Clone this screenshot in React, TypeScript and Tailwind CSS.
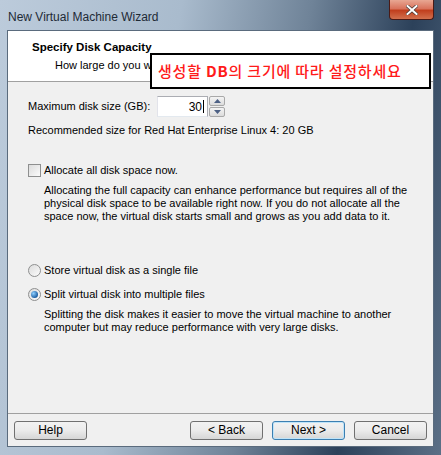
import { useState } from "react";

const font = { fontFamily: '"Liberation Sans", Arial, sans-serif' };

function WinButton({ label, focused }: { label: string; focused?: boolean }) {
  return (
    <button
      className={
        "w-[73px] h-[19px] rounded-[3px] border text-[12px] leading-none text-black flex items-center justify-center bg-gradient-to-b from-[#f2f2f2] via-[#ebebeb] to-[#d6d6d6] " +
        (focused ? "border-[#3c7fb1] shadow-[inset_0_0_0_1px_#bfe4f9]" : "border-[#707070]")
      }
    >
      {label}
    </button>
  );
}

function Radio({ checked }: { checked?: boolean }) {
  return (
    <span className="shrink-0 w-[13px] h-[13px] rounded-full border border-[#8e8f8f] bg-gradient-to-br from-[#dcdcdc] to-[#fbfbfb] flex items-center justify-center">
      {checked && (
        <span className="w-[7px] h-[7px] rounded-full bg-[radial-gradient(circle_at_35%_35%,#8fd0ff,#1d5fa3_70%)]" />
      )}
    </span>
  );
}

export default function App() {
  const [size] = useState("30");
  return (
    <div
      className="relative w-[441px] h-[455px] overflow-hidden bg-[linear-gradient(100deg,#bccbdb_0%,#a9bbcd_35%,#6f8398_60%,#2c415a_80%,#5b6f86_100%)]"
      style={font}
    >
      {/* title bar */}
      <div className="h-[30px] flex items-start justify-between pl-[8px]">
        <span className="mt-[8px] text-[12px] text-[#1e2a36]">New Virtual Machine Wizard</span>
        <div className="mr-[7px] w-[45px] h-[20px] rounded-b-[4px] border border-t-0 border-[#4a1a16] bg-[linear-gradient(#e8a793_0%,#d9735c_45%,#c13f1e_55%,#d2704d_100%)] flex items-center justify-center">
          <svg width="12" height="10" viewBox="0 0 12 10">
            <path d="M1.5 1 L10.5 9 M10.5 1 L1.5 9" stroke="#4a3a36" strokeWidth="3.4" strokeLinecap="square" />
            <path d="M1.5 1 L10.5 9 M10.5 1 L1.5 9" stroke="#ffffff" strokeWidth="2" strokeLinecap="square" />
          </svg>
        </div>
      </div>

      {/* client area */}
      <div className="mx-[7px] h-[417px] border border-[#5a6b7d] bg-[#f0f0f0] flex flex-col text-[11px] text-black">
        <div className="h-[51px] bg-white border-b border-[#a0a0a0] pl-[24px] pt-[9px]">
          <div className="font-bold text-[11.5px] leading-[15px]">Specify Disk Capacity</div>
          <div className="ml-[23px] mt-[3px] whitespace-nowrap leading-[15px]">How large do you w</div>
        </div>

        <div className="flex-1 pl-[20px] pr-[10px] pt-[14px]">
          <div className="flex items-center h-[21px]">
            <span className="w-[129px] whitespace-nowrap">Maximum disk size (GB):</span>
            <div className="w-[51px] h-[21px] border border-[#abadb3] border-b-[#e3e9ef] border-l-[#e2e3ea] bg-white flex items-center justify-end pr-[3px] text-[12px]">
              {size}
              <span className="w-px h-[13px] bg-black ml-px" />
            </div>
            <div className="ml-px w-[16px] h-[21px] flex flex-col gap-px">
              <span className="flex-1 border border-[#a9a9a9] rounded-[2px] bg-gradient-to-b from-[#f4f4f4] to-[#dcdcdc] flex items-center justify-center">
                <svg width="7" height="4" viewBox="0 0 7 4"><path d="M0 4 L3.5 0 L7 4Z" fill="#4d6185" /></svg>
              </span>
              <span className="flex-1 border border-[#a9a9a9] rounded-[2px] bg-gradient-to-b from-[#f4f4f4] to-[#dcdcdc] flex items-center justify-center">
                <svg width="7" height="4" viewBox="0 0 7 4"><path d="M0 0 L3.5 4 L7 0Z" fill="#4d6185" /></svg>
              </span>
            </div>
          </div>
          <div className="mt-[6px] leading-[15px]">Recommended size for Red Hat Enterprise Linux 4: 20 GB</div>

          <label className="mt-[25px] flex items-center gap-[3px] h-[15px]">
            <span className="shrink-0 w-[13px] h-[13px] border border-[#8e8f8f] bg-gradient-to-br from-[#dcdcdc] to-[#fbfbfb]" />
            <span>Allocate all disk space now.</span>
          </label>
          <p className="mt-[6px] pl-[16px] leading-[13px]">
            Allocating the full capacity can enhance performance but requires all of the physical disk space to be available right now. If you do not allocate all the space now, the virtual disk starts small and grows as you add data to it.
          </p>

          <label className="mt-[40px] flex items-center gap-[3px] h-[15px]">
            <Radio />
            <span>Store virtual disk as a single file</span>
          </label>
          <label className="mt-[9px] flex items-center gap-[3px] h-[15px]">
            <Radio checked />
            <span>Split virtual disk into multiple files</span>
          </label>
          <p className="mt-[6px] pl-[16px] leading-[13px]">
            Splitting the disk makes it easier to move the virtual machine to another computer but may reduce performance with very large disks.
          </p>
        </div>

        <div className="h-[33px] border-t border-[#a0a0a0] flex items-center px-[6px]">
          <WinButton label="Help" />
          <div className="ml-auto flex gap-[9px]">
            <WinButton label="< Back" />
            <WinButton label="Next >" focused />
            <WinButton label="Cancel" />
          </div>
        </div>
      </div>

      {/* annotation overlay */}
      <div className="absolute left-[150px] top-[53px] w-[281px] h-[36px] border-2 border-black bg-white flex items-center pl-[6px]">
        <span
          className="text-[15px] font-medium text-[#ff1a1a] tracking-[0.8px]"
          style={{ fontFamily: '"Noto Sans CJK KR", "Liberation Sans", sans-serif' }}
        >
          생성할 <b className="font-bold">DB</b>의 크기에 따라 설정하세요
        </span>
      </div>
    </div>
  );
}
